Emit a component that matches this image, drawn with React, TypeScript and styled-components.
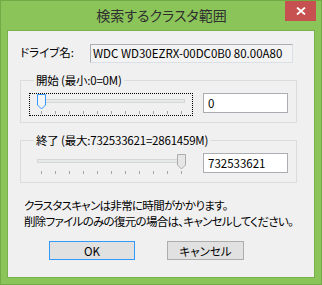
import React from "react";
import styled, { createGlobalStyle } from "styled-components";

const GlobalStyle = createGlobalStyle`
  html, body {
    margin: 0;
    padding: 0;
    background: #8bc55a;
  }
  body {
    font-family: "Noto Sans CJK JP", "Liberation Sans", sans-serif;
    font-feature-settings: "palt";
  }
`;

const TICKS = 11;

const Slider: React.FC<{ value: number; max: number; focused?: boolean }> = ({
  value,
  max,
  focused,
}) => {
  // thumb travels 140px between first and last tick
  const left = 7 + Math.round((value / max) * 140);
  return (
    <SliderBox focused={focused}>
      <Track />
      <Thumb style={{ left }} width="9" height="16" viewBox="0 0 9 16">
        <path
          d="M0.5 0.5 H8.5 V11 L4.5 15 L0.5 11 Z"
          fill={focused ? "#f2f4f6" : "#e6e6e6"}
          stroke={focused ? "#3399ff" : "#acacac"}
        />
      </Thumb>
      <Ticks>
        {Array.from({ length: TICKS }).map((_, i) => (
          <Tick key={i} />
        ))}
      </Ticks>
    </SliderBox>
  );
};

const App: React.FC = () => {
  return (
    <>
      <GlobalStyle />
      <Window>
        <TitleBar>
          <Title>検索するクラスタ範囲</Title>
          <CloseButton>
            <svg width="10" height="8" viewBox="0 0 10 8">
              <path d="M1 0.5 L9 7.5 M9 0.5 L1 7.5" stroke="#fff" strokeWidth="1.8" />
            </svg>
          </CloseButton>
        </TitleBar>

        <Client>
          <DriveRow>
            <DriveLabel>ドライブ名:</DriveLabel>
            <ReadOnlyBox>WDC WD30EZRX-00DC0B0 80.00A80</ReadOnlyBox>
          </DriveRow>

          <Group>
            <Legend>開始 (最小:0=0M)</Legend>
            <GroupRow>
              <Slider value={0} max={732533621} focused />
              <EditBox>0</EditBox>
            </GroupRow>
          </Group>

          <Group>
            <Legend>終了 (最大:732533621=2861459M)</Legend>
            <GroupRow>
              <Slider value={732533621} max={732533621} />
              <EditBox>732533621</EditBox>
            </GroupRow>
          </Group>

          <Notice>
            クラスタスキャンは非常に時間がかかります。
            <br />
            削除ファイルのみの復元の場合は、キャンセルしてください。
          </Notice>

          <ButtonRow>
            <DialogButton primary width={86}>
              OK
            </DialogButton>
            <DialogButton width={77}>キャンセル</DialogButton>
          </ButtonRow>
        </Client>
      </Window>
    </>
  );
};

export default App;

const Window = styled.div`
  width: 322px;
  height: 285px;
  box-sizing: border-box;
  background: #8bc55a;
  border: 1px solid #72aa45;
  display: flex;
  flex-direction: column;
`;

const TitleBar = styled.div`
  position: relative;
  height: 29px;
  flex-shrink: 0;
`;

const Title = styled.div`
  text-align: center;
  font-size: 14px;
  line-height: 29px;
  color: #2f2f2f;
  padding-left: 1px;
`;

const CloseButton = styled.div`
  position: absolute;
  top: 0;
  right: 5px;
  width: 31px;
  height: 20px;
  background: #c75050;
  display: flex;
  align-items: center;
  justify-content: center;
`;

const Client = styled.div`
  margin: 0 6px 0 6px;
  height: 248px;
  box-sizing: border-box;
  background: #f0f0f0;
  border: 1px solid #78b04b;
  padding: 13px 0 0 12px;
  font-size: 11.5px;
  color: #000;
  display: flex;
  flex-direction: column;
`;

const DriveRow = styled.div`
  display: flex;
  align-items: center;
  height: 19px;
`;

const DriveLabel = styled.div`
  width: 70px;
  line-height: 19px;
  margin-top: -2px;
`;

const ReadOnlyBox = styled.div`
  width: 203px;
  height: 19px;
  box-sizing: border-box;
  border: 1px solid #abadb3;
  border-right-color: #dbdfe6;
  border-bottom-color: #dbdfe6;
  background: #f3f3f3;
  padding-left: 2px;
  line-height: 17px;
  white-space: nowrap;
`;

const Group = styled.fieldset`
  margin: 9px 0 0 0;
  width: 277px;
  box-sizing: border-box;
  border: 1px solid #dcdcdc;
  padding: 5px 8px 6px 8px;
  & + & {
    margin-top: 9px;
  }
`;

const Legend = styled.legend`
  padding: 0 2px;
  margin-left: 5px;
  font-size: 11.5px;
  line-height: 16px;
  letter-spacing: -0.2px;
  white-space: nowrap;
`;

const GroupRow = styled.div`
  display: flex;
  align-items: flex-start;
  gap: 10px;
`;

const SliderBox = styled.div<{ focused?: boolean }>`
  position: relative;
  width: 164px;
  height: 23px;
  box-sizing: border-box;
  border: 1px dotted ${({ focused }) => (focused ? "#000" : "transparent")};
`;

const Track = styled.div`
  position: absolute;
  left: 7px;
  top: 5px;
  width: 148px;
  height: 4px;
  box-sizing: border-box;
  border: 1px solid #d6d6d6;
  background: #e7eaea;
`;

const Thumb = styled.svg`
  position: absolute;
  top: 0;
  display: block;
`;

const Ticks = styled.div`
  position: absolute;
  left: 11px;
  top: 17px;
  width: 141px;
  display: flex;
  justify-content: space-between;
`;

const Tick = styled.div`
  width: 1px;
  height: 3px;
  background: #a5a5a5;
`;

const EditBox = styled.div`
  width: 85px;
  height: 20px;
  box-sizing: border-box;
  border: 1px solid #abadb3;
  background: #fff;
  padding-left: 4px;
  line-height: 18px;
`;

const Notice = styled.div`
  margin: 14px 0 0 4px;
  line-height: 16px;
  letter-spacing: -0.7px;
  white-space: nowrap;
`;

const ButtonRow = styled.div`
  display: flex;
  gap: 32px;
  margin: 12px 0 0 29px;
`;

const DialogButton = styled.div<{ primary?: boolean; width: number }>`
  width: ${({ width }) => width}px;
  height: 19px;
  box-sizing: border-box;
  background: #e1e1e1;
  border: 1px solid ${({ primary }) => (primary ? "#3399ff" : "#adadad")};
  display: flex;
  align-items: center;
  justify-content: center;
  font-size: 11.5px;
`;
